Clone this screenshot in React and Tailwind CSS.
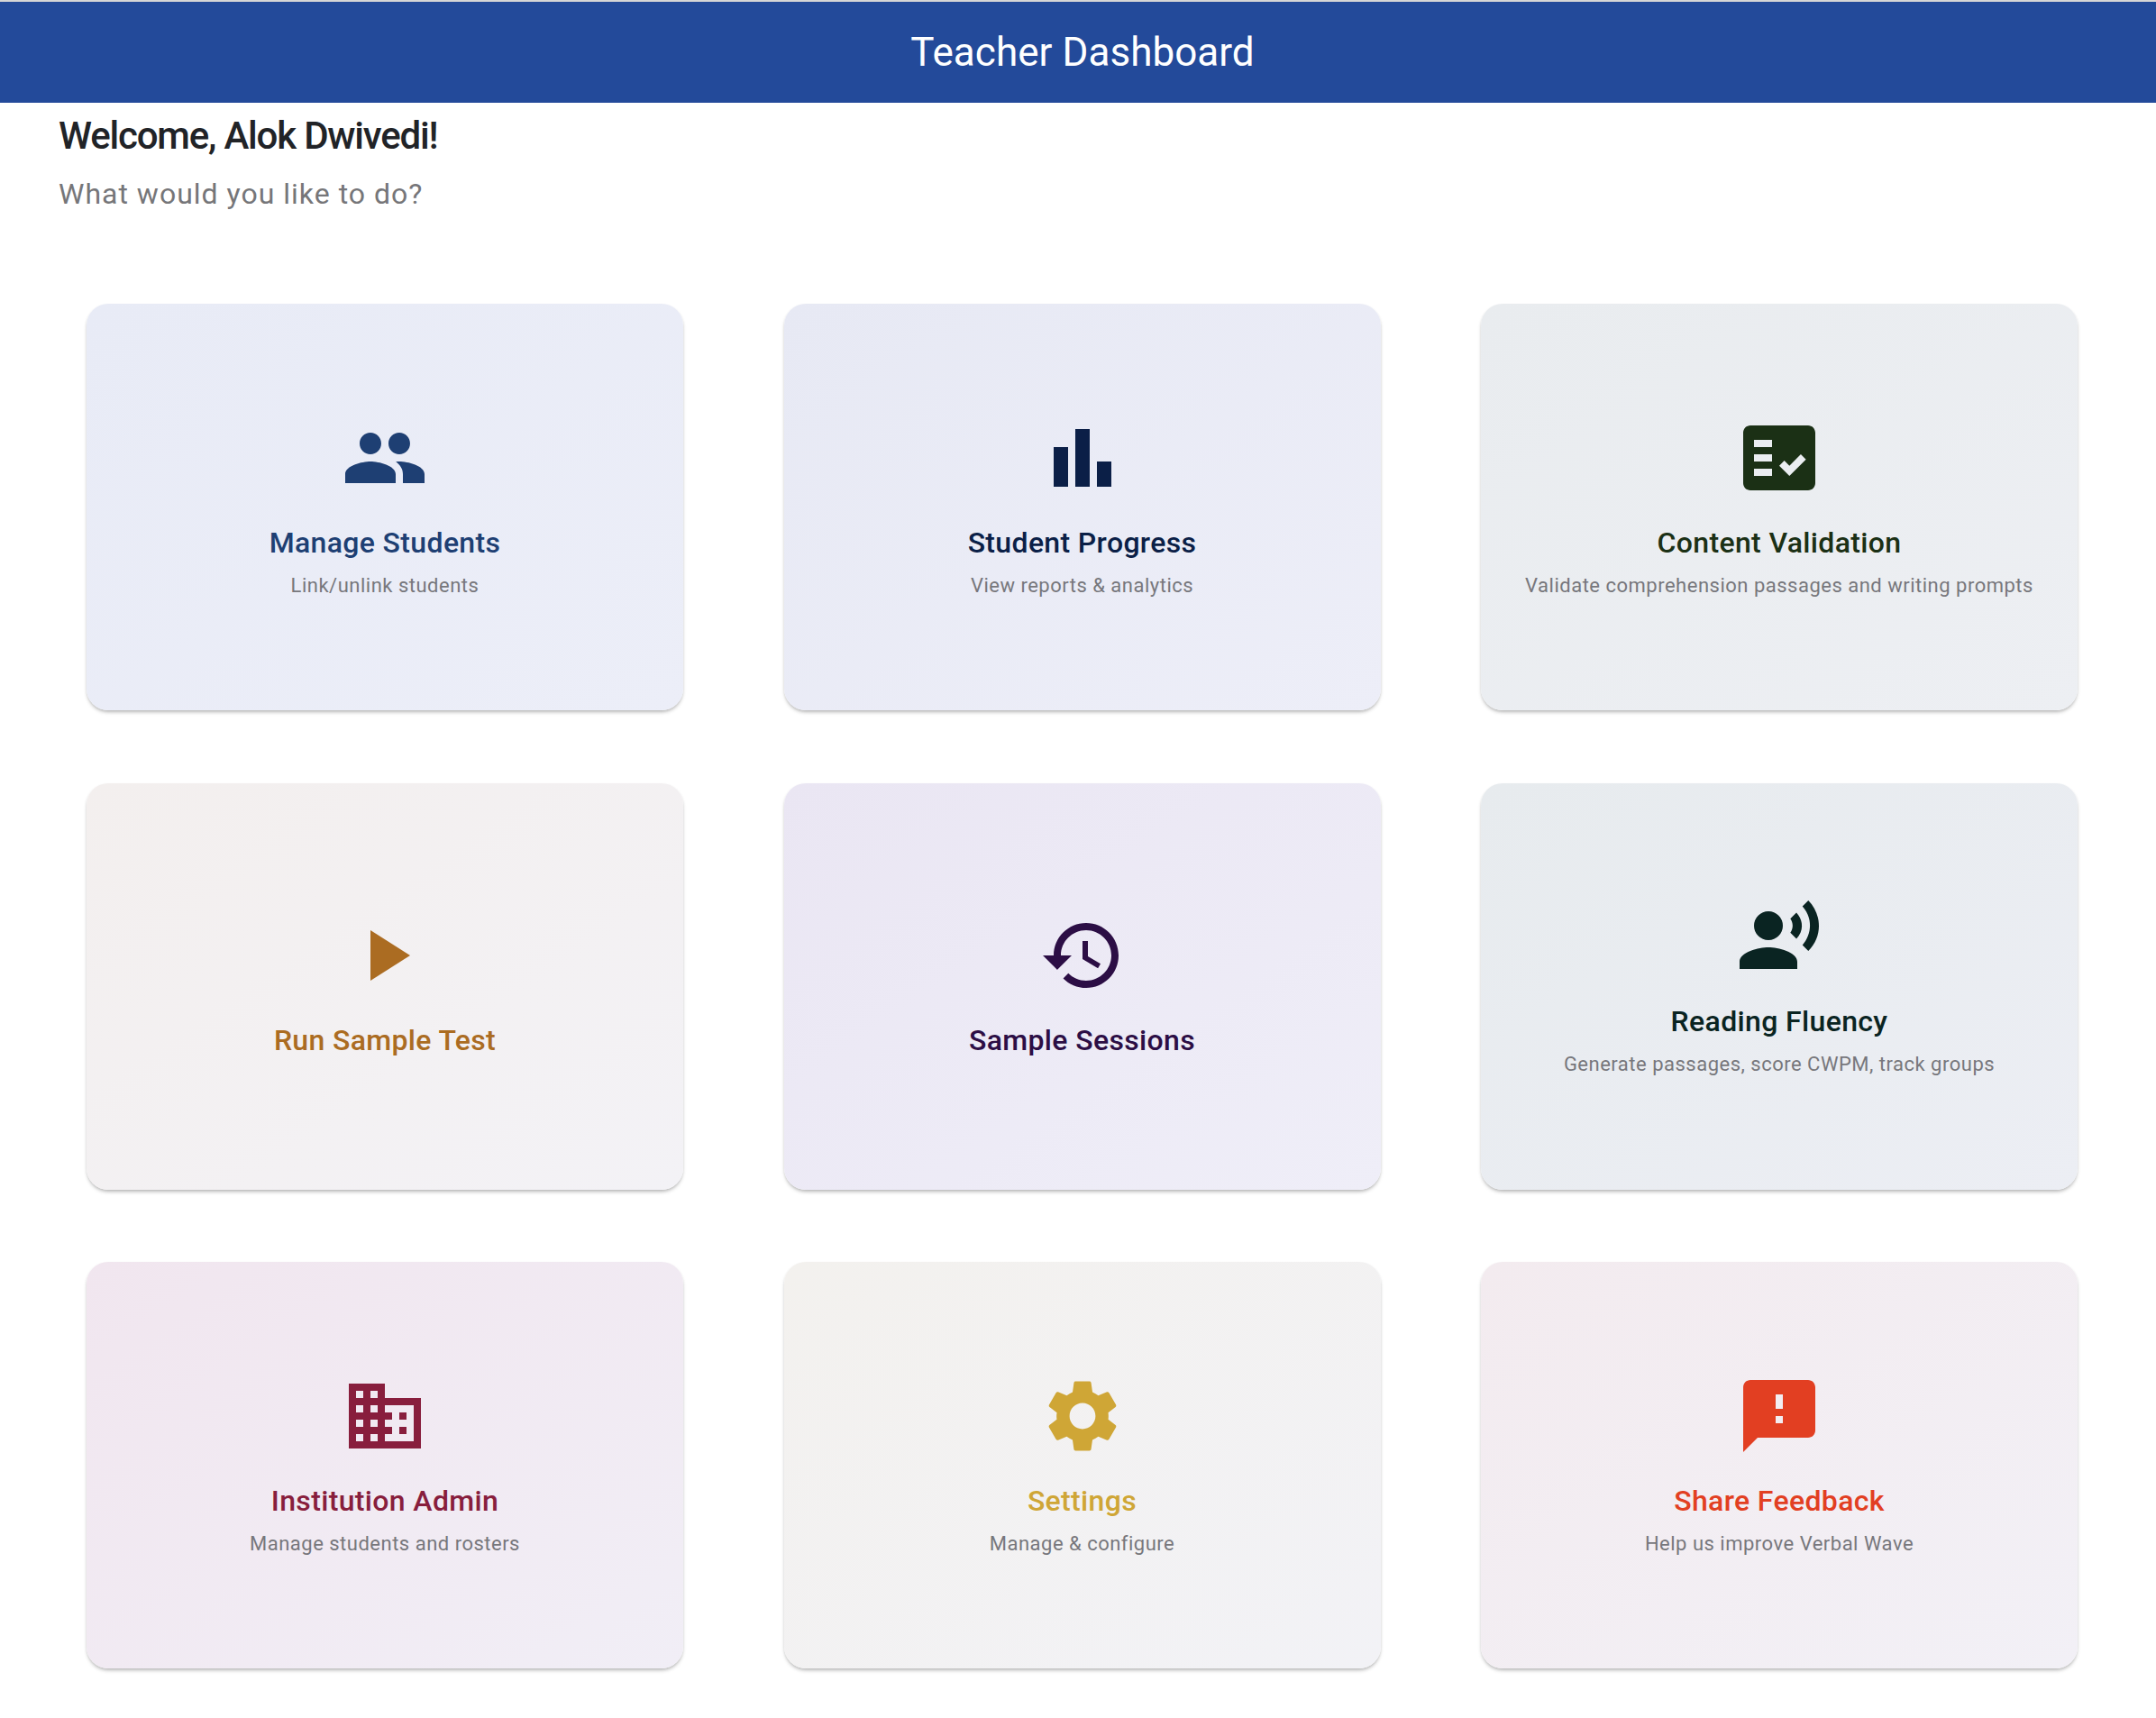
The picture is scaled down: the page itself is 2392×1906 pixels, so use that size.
const paths = {
  people: "M16 11c1.66 0 2.99-1.34 2.99-3S17.66 5 16 5c-1.66 0-3 1.34-3 3s1.34 3 3 3zm-8 0c1.66 0 2.99-1.34 2.99-3S9.66 5 8 5C6.34 5 5 6.34 5 8s1.34 3 3 3zm0 2c-2.33 0-7 1.17-7 3.5V19h14v-2.5c0-2.33-4.67-3.5-7-3.5zm8 0c-.29 0-.62.02-.97.05 1.16.84 1.97 1.97 1.97 3.45V19h6v-2.5c0-2.33-4.67-3.5-7-3.5z",
  bars: "M4 9h4v11H4zm12 4h4v7h-4zm-6-9h4v16h-4z",
  check: "M20 3H4c-1.1 0-2 .9-2 2v14c0 1.1.9 2 2 2h16c1.1 0 2-.9 2-2V5c0-1.1-.9-2-2-2zM10 17H5v-2h5v2zm0-4H5v-2h5v2zm0-4H5V7h5v2zm4.82 8L12 14.16l1.41-1.41 1.41 1.42L17.99 11l1.42 1.42L14.82 17z",
  play: "M8 5v14l11-7z",
  history: "M13 3c-4.97 0-9 4.03-9 9H1l3.89 3.89.07.14L9 12H6c0-3.87 3.13-7 7-7s7 3.13 7 7-3.13 7-7 7c-1.93 0-3.68-.79-4.94-2.06l-1.42 1.42C8.27 19.99 10.51 21 13 21c4.97 0 9-4.03 9-9s-4.03-9-9-9zm-1 5v5l4.28 2.54.72-1.21-3.5-2.08V8H12z",
  voice: "M5 9a4 4 0 1 0 8 0a4 4 0 1 0-8 0zM9 15c-2.67 0-8 1.34-8 4v2h16v-2c0-2.66-5.33-4-8-4zm7.76-9.64l-1.68 1.69c.84 1.18.84 2.71 0 3.89l1.68 1.69c2.02-2.02 2.02-5.07 0-7.27zM20.07 2l-1.63 1.63c2.77 3.02 2.77 7.56 0 10.74L20.07 16c3.9-3.89 3.91-9.95 0-14z",
  business: "M12 7V3H2v18h20V7H12zM6 19H4v-2h2v2zm0-4H4v-2h2v2zm0-4H4V9h2v2zm0-4H4V5h2v2zm4 12H8v-2h2v2zm0-4H8v-2h2v2zm0-4H8V9h2v2zm0-4H8V5h2v2zm10 12h-8v-2h2v-2h-2v-2h2v-2h-2V9h8v10zm-2-8h-2v2h2v-2zm0 4h-2v2h2v-2z",
  settings: "M19.14 12.94c.04-.3.06-.61.06-.94 0-.32-.02-.64-.07-.94l2.03-1.58c.18-.14.23-.41.12-.61l-1.92-3.32c-.12-.22-.37-.29-.59-.22l-2.39.96c-.5-.38-1.03-.7-1.62-.94l-.36-2.54c-.04-.24-.24-.41-.48-.41h-3.84c-.24 0-.43.17-.47.41l-.36 2.54c-.59.24-1.13.57-1.62.94l-2.39-.96c-.22-.08-.47 0-.59.22L2.74 8.87c-.12.21-.08.47.12.61l2.03 1.58c-.05.3-.09.63-.09.94s.02.64.07.94l-2.03 1.58c-.18.14-.23.41-.12.61l1.92 3.32c.12.22.37.29.59.22l2.39-.96c.5.38 1.03.7 1.62.94l.36 2.54c.05.24.24.41.48.41h3.84c.24 0 .44-.17.47-.41l.36-2.54c.59-.24 1.13-.56 1.62-.94l2.39.96c.22.08.47 0 .59-.22l1.92-3.32c.12-.22.07-.47-.12-.61l-2.01-1.58zM12 15.6c-1.98 0-3.6-1.62-3.6-3.6s1.62-3.6 3.6-3.6 3.6 1.62 3.6 3.6-1.62 3.6-3.6 3.6z",
  feedback: "M20 2H4c-1.1 0-1.99.9-1.99 2L2 22l4-4h14c1.1 0 2-.9 2-2V4c0-1.1-.9-2-2-2zm-7 12h-2v-2h2v2zm0-4h-2V6h2v4z",
};

const cards = [
  { icon: "people", title: "Manage Students", sub: "Link/unlink students", tone: "text-[#1e3f73]", bg: "from-[#e8ebf6] to-[#eceef8]" },
  { icon: "bars", title: "Student Progress", sub: "View reports & analytics", tone: "text-[#0b1f47]", bg: "from-[#e7e9f4] to-[#edeef8]" },
  { icon: "check", title: "Content Validation", sub: "Validate comprehension passages and writing prompts", tone: "text-[#1b3015]", bg: "from-[#e9ecef] to-[#edeff3]" },
  { icon: "play", title: "Run Sample Test", tone: "text-[#ab6c22]", bg: "from-[#f3efee] to-[#f3f2f6]" },
  { icon: "history", title: "Sample Sessions", tone: "text-[#2c0e45]", bg: "from-[#eae6f3] to-[#efeef8]" },
  { icon: "voice", title: "Reading Fluency", sub: "Generate passages, score CWPM, track groups", tone: "text-[#0a2422]", bg: "from-[#e7ebee] to-[#ecEef4]" },
  { icon: "business", title: "Institution Admin", sub: "Manage students and rosters", tone: "text-[#881e3d]", bg: "from-[#f1e6ef] to-[#f1eef6]" },
  { icon: "settings", title: "Settings", sub: "Manage & configure", tone: "text-[#cfa636]", bg: "from-[#f3f1ee] to-[#f2f2f6]" },
  { icon: "feedback", title: "Share Feedback", sub: "Help us improve Verbal Wave", tone: "text-[#e23f22]", bg: "from-[#f3ebef] to-[#f2f0f6]" },
];

function Card({ icon, title, sub, tone, bg }) {
  return (
    <div className={`h-[451px] rounded-[24px] bg-gradient-to-br ${bg} shadow-[0_3px_4px_-1px_rgba(0,0,0,0.28),0_1px_3px_rgba(0,0,0,0.05)] flex flex-col items-center justify-center ${sub ? "" : "pb-[3px]"}`}>
      <svg viewBox="0 0 24 24" fill="currentColor" className={`w-24 h-24 ${tone}`}>
        <path d={paths[icon]} />
      </svg>
      <h2 className={`mt-[26px] text-[32px] leading-[40px] font-medium tracking-[0.35px] ${tone}`}>{title}</h2>
      {sub && <p className="mt-[12px] text-[22px] leading-[32px] tracking-[0.5px] text-[#77777c]">{sub}</p>}
    </div>
  );
}

export default function App() {
  return (
    <div className="min-h-[1906px] bg-white font-['Roboto',sans-serif]">
      <header className="h-[114px] border-t-2 border-[#d6d6d6] bg-[#234a9a] flex items-center justify-center pl-[10px]">
        <h1 className="text-[44px] leading-[54px] font-normal tracking-[0.05px] text-white">Teacher Dashboard</h1>
      </header>
      <div className="pl-[65px] pt-[9px]">
        <h2 className="text-[42px] leading-[56px] font-medium tracking-[-1.2px] text-[#212327]">Welcome, Alok Dwivedi!</h2>
        <p className="mt-[12px] text-[32px] leading-[48px] tracking-[1px] text-[#767679]">What would you like to do?</p>
      </div>
      <main className="mt-[98px] ml-[96px] grid grid-cols-[repeat(3,662px)] gap-x-[111.5px] gap-y-[80.5px]">
        {cards.map((c) => (
          <Card key={c.title} {...c} />
        ))}
      </main>
    </div>
  );
}
